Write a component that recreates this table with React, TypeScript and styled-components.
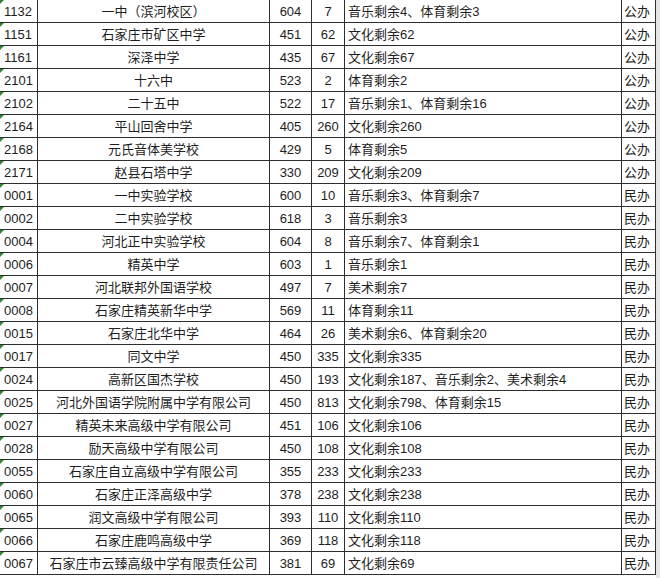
import { Fragment } from "react";
import styled, { createGlobalStyle } from "styled-components";

const GlobalStyle = createGlobalStyle`
    html, body {
        margin: 0;
        padding: 0;
        background: #ffffff;
        overflow: hidden;
    }
`

const Page = styled.div`
    display: flex;
    align-items: flex-start;
    width: 660px;
    height: 578px;
    overflow: hidden;
`

const Sheet = styled.div`
    display: grid;
    grid-template-columns: 38px 232px 42px 33px 277px 34px;
    grid-auto-rows: 23px;
    margin: -1px 0 0 -1px;
    border-left: 1px solid #2e2e2e;
    border-top: 1px solid #2e2e2e;
    flex: none;
`

const Filler = styled.div`
    flex: 1;
    align-self: stretch;
    background: #e4e4e4;
`

const Cell = styled.div<{ $align?: "left" | "center" }>`
    position: relative;
    box-sizing: border-box;
    border-right: 1px solid #2e2e2e;
    border-bottom: 1px solid #2e2e2e;
    padding: 2px 3px 0;
    font-family: "Liberation Sans", "Noto Sans CJK SC", sans-serif;
    font-size: 13px;
    line-height: 20px;
    color: #1e1e1e;
    white-space: nowrap;
    overflow: hidden;
    text-align: ${(props) => props.$align ?? "left"};
`

const CodeCell = styled(Cell)`
    padding-left: 4px;

    &::before {
        content: "";
        position: absolute;
        top: 0;
        left: 0;
        border-top: 4px solid #2c8a2c;
        border-right: 4px solid transparent;
    }
`

const TypeCell = styled(Cell)`
    padding-left: 2px;
    padding-right: 1px;
`

type School = [string, string, number, number, string, string]

const schools: School[] = [
    ["1132", "一中（滨河校区）", 604, 7, "音乐剩余4、体育剩余3", "公办"],
    ["1151", "石家庄市矿区中学", 451, 62, "文化剩余62", "公办"],
    ["1161", "深泽中学", 435, 67, "文化剩余67", "公办"],
    ["2101", "十六中", 523, 2, "体育剩余2", "公办"],
    ["2102", "二十五中", 522, 17, "音乐剩余1、体育剩余16", "公办"],
    ["2164", "平山回舍中学", 405, 260, "文化剩余260", "公办"],
    ["2168", "元氏音体美学校", 429, 5, "体育剩余5", "公办"],
    ["2171", "赵县石塔中学", 330, 209, "文化剩余209", "公办"],
    ["0001", "一中实验学校", 600, 10, "音乐剩余3、体育剩余7", "民办"],
    ["0002", "二中实验学校", 618, 3, "音乐剩余3", "民办"],
    ["0004", "河北正中实验学校", 604, 8, "音乐剩余7、体育剩余1", "民办"],
    ["0006", "精英中学", 603, 1, "音乐剩余1", "民办"],
    ["0007", "河北联邦外国语学校", 497, 7, "美术剩余7", "民办"],
    ["0008", "石家庄精英新华中学", 569, 11, "体育剩余11", "民办"],
    ["0015", "石家庄北华中学", 464, 26, "美术剩余6、体育剩余20", "民办"],
    ["0017", "同文中学", 450, 335, "文化剩余335", "民办"],
    ["0024", "高新区国杰学校", 450, 193, "文化剩余187、音乐剩余2、美术剩余4", "民办"],
    ["0025", "河北外国语学院附属中学有限公司", 450, 813, "文化剩余798、体育剩余15", "民办"],
    ["0027", "精英未来高级中学有限公司", 451, 106, "文化剩余106", "民办"],
    ["0028", "励天高级中学有限公司", 450, 108, "文化剩余108", "民办"],
    ["0055", "石家庄自立高级中学有限公司", 355, 233, "文化剩余233", "民办"],
    ["0060", "石家庄正泽高级中学", 378, 238, "文化剩余238", "民办"],
    ["0065", "润文高级中学有限公司", 393, 110, "文化剩余110", "民办"],
    ["0066", "石家庄鹿鸣高级中学", 369, 118, "文化剩余118", "民办"],
    ["0067", "石家庄市云臻高级中学有限责任公司", 381, 69, "文化剩余69", "民办"],
]

const App = () => {
    return (
        <Page>
            <GlobalStyle />
            <Sheet>
                {schools.map(([code, name, score, left, detail, kind]) => (
                    <Fragment key={code}>
                        <CodeCell>{code}</CodeCell>
                        <Cell $align="center">{name}</Cell>
                        <Cell $align="center">{score}</Cell>
                        <Cell $align="center">{left}</Cell>
                        <Cell>{detail}</Cell>
                        <TypeCell>{kind}</TypeCell>
                    </Fragment>
                ))}
            </Sheet>
            <Filler />
        </Page>
    )
}

export default App;
